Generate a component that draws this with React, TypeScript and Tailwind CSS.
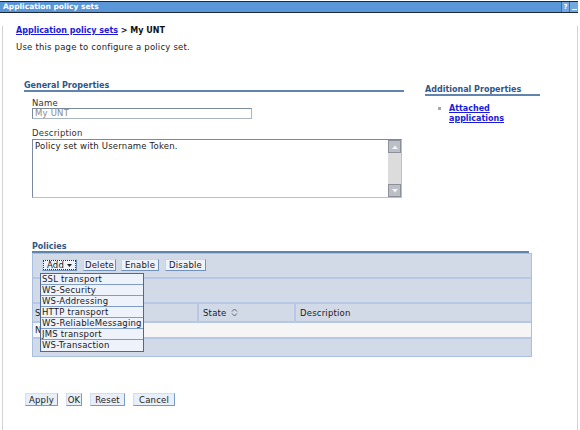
import React from "react";

const font = { fontFamily: '"DejaVu Sans", Verdana, sans-serif' };

// normal body text: Verdana-like, a touch wide
const txt = "text-[8.5px] tracking-[0.2px]";

const SortIcon = () => (
  <svg width="7" height="9" viewBox="0 0 7 9" className="ml-[4px]">
    <path d="M1 3.5 L3.5 1 L6 3.5" fill="none" stroke="#555" strokeWidth="0.9" />
    <path d="M1 5.5 L3.5 8 L6 5.5" fill="none" stroke="#555" strokeWidth="0.9" />
  </svg>
);

const ToolButton: React.FC<{ w: string; children: React.ReactNode; focus?: boolean }> = ({ w, children, focus }) => (
  <div
    className={`${w} h-[12px] flex items-center justify-center bg-[#eef2f9] border border-t-[#c9d6ea] border-l-[#c9d6ea] border-r-[#6f8fbd] border-b-[#6f8fbd] ${txt} leading-[10px] text-[#1a1a1a]`}
  >
    {focus ? (
      <span className="flex items-center border border-dotted border-[#333] px-[3px] leading-[8px]">{children}</span>
    ) : (
      children
    )}
  </div>
);

const menuItems = [
  "SSL transport",
  "WS-Security",
  "WS-Addressing",
  "HTTP transport",
  "WS-ReliableMessaging",
  "JMS transport",
  "WS-Transaction",
];

export default function App() {
  return (
    <div className="w-[580px] h-[430px] bg-white overflow-hidden" style={font}>
      {/* title bar */}
      <div className="mt-[1px] h-[12px] w-[578px] bg-[#5a97d8] border-t border-b border-[#1d2a36] flex items-center justify-between pl-[3px]">
        <span className="text-white font-bold text-[7.5px] leading-[10px]">Application policy sets</span>
        <div className="flex h-full">
          <div className="w-[8px] h-full bg-[#74a8e0] border-l border-[#3d6fa8] flex items-center justify-center text-white text-[7px] font-bold leading-[8px]">
            ?
          </div>
          <div className="w-[9px] h-full bg-[#74a8e0] border-l border-[#3d6fa8] flex items-end justify-center pb-[2px]">
            <div className="w-[5px] h-[1px] bg-white" />
          </div>
        </div>
      </div>

      {/* page frame */}
      <div className="ml-[2px] w-[576px] h-[415px] border-l border-r border-b border-[#d2d2d2]">
        {/* breadcrumb */}
        <div className="mt-[13px] pl-[13px] text-[8px] leading-[10px] font-bold text-[#111]">
          <span className="text-[#1a1ad8] underline">Application policy sets</span> &gt; My UNT
        </div>
        <div className={`mt-[6px] pl-[13px] ${txt} leading-[10px] text-[#222]`}>Use this page to configure a policy set.</div>

        {/* properties */}
        <div className="mt-[28px] flex items-start">
          <div className="ml-[21px] w-[380px]">
            <div className="mt-[1px] h-[9px] text-[8px] leading-[9px] font-bold text-[#2e5687]">General Properties</div>
            <div className="h-[2px] bg-[#5f84ae]" />
            <div className={`ml-[8px] mt-[6px] ${txt} leading-[10px] text-[#333]`}>Name</div>
            <div
              className={`ml-[8px] w-[220px] h-[11px] border border-t-[#7b8a99] border-l-[#7b8a99] border-r-[#aab6c4] border-b-[#aab6c4] ${txt} leading-[9px] pl-[2px] text-[#8a8a8a]`}
            >
              My UNT
            </div>
            <div className={`ml-[8px] mt-[9px] ${txt} leading-[10px] text-[#333]`}>Description</div>
            <div className="ml-[8px] mt-[1px] w-[370px] h-[59px] border border-t-[#7b8aa0] border-l-[#7b8aa0] border-r-[#a9c3e0] border-b-[#a9c3e0] flex">
              <div className={`flex-1 ${txt} leading-[10px] pl-[2px] pt-[1px] text-[#222]`}>Policy set with Username Token.</div>
              <div className="w-[13px] h-full bg-[#dcdcdc] flex flex-col justify-between">
                <div className="h-[13px] bg-[#bdbfc6] border border-[#8b909c] flex items-center justify-center">
                  <svg width="6" height="4" viewBox="0 0 6 4">
                    <path d="M0 4 L3 0.5 L6 4Z" fill="#f4f4f4" />
                  </svg>
                </div>
                <div className="h-[13px] bg-[#bdbfc6] border border-[#8b909c] flex items-center justify-center">
                  <svg width="6" height="4" viewBox="0 0 6 4">
                    <path d="M0 0 L3 3.5 L6 0Z" fill="#f4f4f4" />
                  </svg>
                </div>
              </div>
            </div>
          </div>

          <div className="ml-[21px] w-[115px] mt-[6px]">
            <div className="h-[8px] text-[8px] leading-[8px] font-bold text-[#2e5687]">Additional Properties</div>
            <div className="h-[2px] bg-[#5f84ae]" />
            <div className="mt-[8px] flex">
              <div className="ml-[13px] mt-[3px] w-[3px] h-[3px] bg-[#a8a8a8]" />
              <div className="ml-[8px] text-[8px] leading-[10px] font-bold text-[#1a1ad8] underline">
                Attached
                <br />
                applications
              </div>
            </div>
          </div>
        </div>

        {/* policies */}
        <div className="ml-[29px] w-[500px] mt-[44px]">
          <div className="h-[9px] text-[8px] leading-[9px] font-bold text-[#2e5687]">Policies</div>
          <div className="w-[497px] h-[2px] bg-[#5f84ae]" />
          <div className={`relative border border-[#a9bfe2] bg-[#d2d9e7] ${txt} leading-[10px] text-[#222]`}>
            <div className="h-[25px] border-b-2 border-[#b6c8e6] flex items-start pt-[5px] pl-[9px]">
              <ToolButton w="w-[35px]" focus>
                Add
                <svg width="5" height="3" viewBox="0 0 5 3" className="ml-[3px]">
                  <path d="M0 0 L5 0 L2.5 3Z" fill="#222" />
                </svg>
              </ToolButton>
              <div className="ml-[6px]">
                <ToolButton w="w-[33px]">Delete</ToolButton>
              </div>
              <div className="ml-[5px]">
                <ToolButton w="w-[38px]">Enable</ToolButton>
              </div>
              <div className="ml-[6px]">
                <ToolButton w="w-[41px]">Disable</ToolButton>
              </div>
            </div>
            <div className="h-[25px] border-b-2 border-[#b6c8e6]" />
            <div className="h-[19px] border-b-2 border-[#b6c8e6] flex">
              <div className="w-[164px] pl-[2px] flex items-center">Select</div>
              <div className="w-[97px] border-l-2 border-[#b6c8e6] pl-[4px] flex items-center">
                State
                <SortIcon />
              </div>
              <div className="flex-1 border-l-2 border-[#b6c8e6] pl-[4px] flex items-center">Description</div>
            </div>
            <div className="h-[16px] border-b-2 border-[#b6c8e6] bg-[#f5f5f5] pl-[2px] flex items-center">None</div>
            <div className="h-[17px]" />

            {/* dropdown menu */}
            <div className="absolute left-[7px] top-[19px] w-[104px] bg-[#5d7fb0] border border-[#4b6a99]">
              {menuItems.map((m) => (
                <div
                  key={m}
                  className={`h-[11px] bg-[#eef2fb] border-b border-[#7f9cc6] last:border-b-0 pl-[1px] ${txt} leading-[10px] text-[#1a1a1a] whitespace-nowrap`}
                >
                  {m}
                </div>
              ))}
            </div>
          </div>
        </div>

        {/* bottom buttons */}
        <div className="mt-[36px] ml-[22px] flex gap-[8px]">
          {[
            ["Apply", "w-[33px]"],
            ["OK", "w-[16px]"],
            ["Reset", "w-[35px]"],
            ["Cancel", "w-[42px]"],
          ].map(([t, w]) => (
            <div
              key={t}
              className={`${w} h-[13px] flex items-center justify-center bg-[#e9eff8] border border-t-[#d2ddef] border-l-[#d2ddef] border-r-[#7b98c4] border-b-[#7b98c4] ${txt} leading-[10px] text-[#1a1a1a]`}
            >
              {t}
            </div>
          ))}
        </div>
      </div>
    </div>
  );
}
